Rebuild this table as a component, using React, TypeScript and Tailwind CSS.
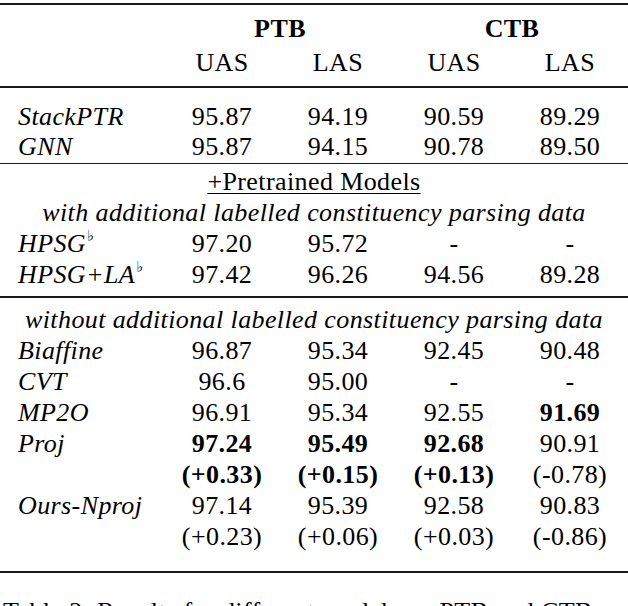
import React from "react";

type Cell = { v: string; b?: boolean };

const Row = ({
  label,
  sup,
  cells,
  className = "",
}: {
  label?: string;
  sup?: boolean;
  cells: Cell[];
  className?: string;
}) => (
  <div className={`grid grid-cols-[164px_116px_116px_116px_116px] h-[31px] leading-[31px] ${className}`}>
    <div className="pl-[18px] italic whitespace-nowrap">
      {label}
      {sup && (
        <span className="not-italic inline-block text-[15px] leading-none relative -top-[11px] ml-[1px] font-['DejaVu_Serif',serif]">
          ♭
        </span>
      )}
    </div>
    {cells.map((c, i) => (
      <div key={i} className={`text-center whitespace-nowrap ${c.b ? "font-bold" : ""}`}>
        {c.v}
      </div>
    ))}
  </div>
);

const c = (...vals: string[]): Cell[] =>
  vals.map((v) => (v.startsWith("*") ? { v: v.slice(1), b: true } : { v }));

export default function App() {
  return (
    <div className="w-[628px] h-[606px] overflow-hidden bg-white text-black text-[26px] tracking-[0.4px] font-['Liberation_Serif','Times_New_Roman',serif] pt-[3px]">
      <div className="h-[2px] bg-[#1a1a1a]" />

      {/* header */}
      <div className="grid grid-cols-[164px_232px_232px] h-[31px] leading-[31px] mt-[8px] font-bold">
        <div />
        <div className="text-center">PTB</div>
        <div className="text-center">CTB</div>
      </div>
      <Row cells={c("UAS", "LAS", "UAS", "LAS")} className="mt-[3px]" />
      <div className="h-[2px] bg-[#1a1a1a] mt-[8px]" />

      <Row label="StackPTR" cells={c("95.87", "94.19", "90.59", "89.29")} className="mt-[14px] !h-[30px] !leading-[30px]" />
      <Row label="GNN" cells={c("95.87", "94.15", "90.78", "89.50")} className="!h-[30px] !leading-[30px]" />
      <div className="h-[1px] bg-[#1a1a1a] mt-[1px]" />

      <div className="h-[31px] leading-[31px] text-center mt-[2px]">
        <span className="underline decoration-1 underline-offset-[3px]">+Pretrained Models</span>
      </div>
      <div className="h-[31px] leading-[31px] text-center italic whitespace-nowrap">
        with additional labelled constituency parsing data
      </div>
      <Row label="HPSG" sup cells={c("97.20", "95.72", "-", "-")} />
      <Row label="HPSG+LA" sup cells={c("97.42", "96.26", "94.56", "89.28")} />
      <div className="h-[1.5px] bg-[#1a1a1a] mt-[6px]" />

      <div className="h-[31px] leading-[31px] text-center italic whitespace-nowrap mt-[6px]">
        without additional labelled constituency parsing data
      </div>
      <Row label="Biaffine" cells={c("96.87", "95.34", "92.45", "90.48")} />
      <Row label="CVT" cells={c("96.6", "95.00", "-", "-")} />
      <Row label="MP2O" cells={c("96.91", "95.34", "92.55", "*91.69")} />
      <Row label="Proj" cells={c("*97.24", "*95.49", "*92.68", "90.91")} />
      <Row cells={c("*(+0.33)", "*(+0.15)", "*(+0.13)", "(-0.78)")} />
      <Row label="Ours-Nproj" cells={c("97.14", "95.39", "92.58", "90.83")} />
      <Row cells={c("(+0.23)", "(+0.06)", "(+0.03)", "(-0.86)")} />
      <div className="h-[2.5px] bg-[#1a1a1a] mt-[19px]" />

      <div className="h-[31px] leading-[31px] pl-[3px] whitespace-nowrap mt-[23px]">
        Table 2: Results for different models on PTB and CTB.
      </div>
    </div>
  );
}
